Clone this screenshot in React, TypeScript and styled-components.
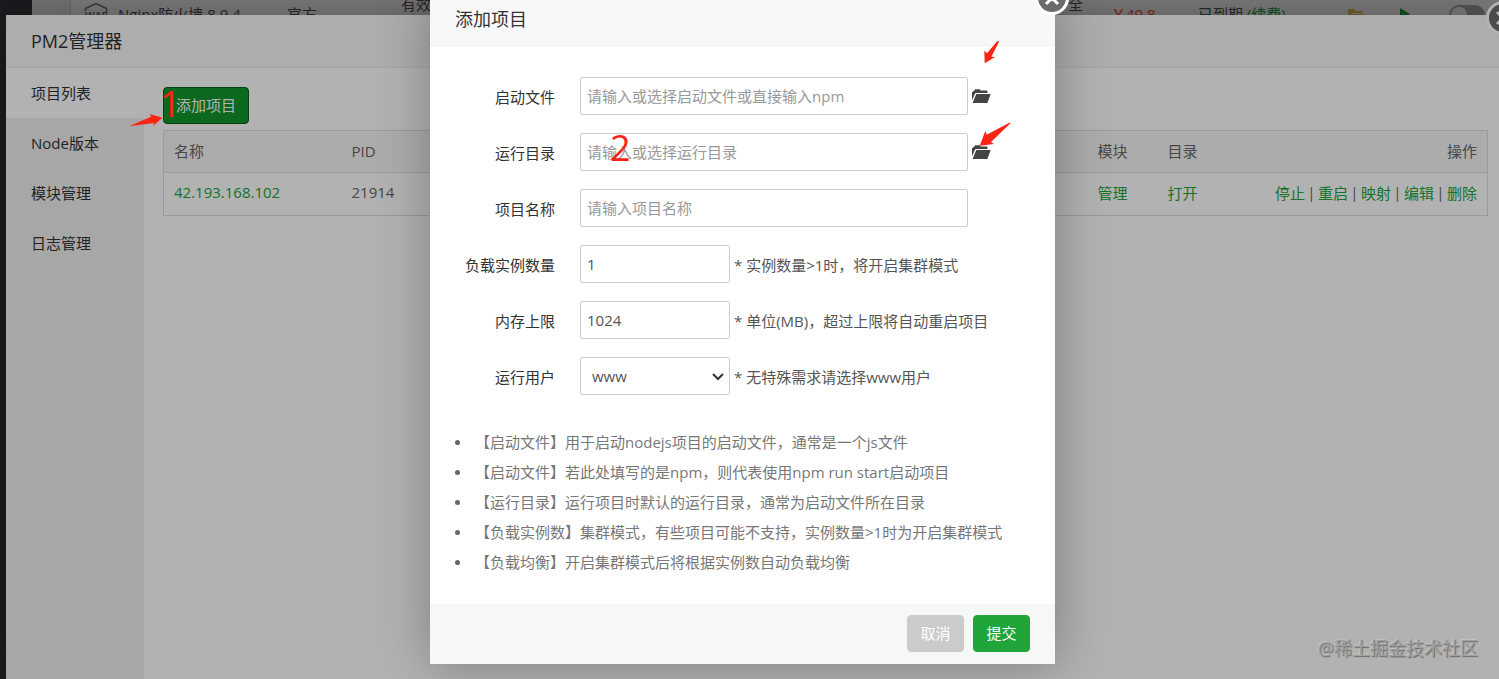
import React from "react";
import styled, { createGlobalStyle } from "styled-components";

const Global = createGlobalStyle`
  *, *::before, *::after { box-sizing: border-box; }
  html, body { margin: 0; padding: 0; }
  body, button, input, select {
    font-family: "Open Sans", "Noto Sans CJK SC", sans-serif;
    font-size: 15px;
  }
  body { color: #333; }
  a { color: #20a53a; text-decoration: none; }
`;

const Screen = styled.div`
  position: relative;
  min-height: 100vh;
  overflow: hidden;
  display: flex;
  background: #f1f1f1;
`;

/* ---------- soft-store page at the back ---------- */

const NavRail = styled.div`
  flex: 0 0 32px;
  background: #353a40;
`;

const StorePage = styled.main`
  flex: 1;
  min-width: 0;
  padding-left: 38px;
`;

const PluginRow = styled.div`
  display: grid;
  grid-template-columns: 34px 169px 114px minmax(0, 1fr) 87px 149px 52px 50px 50px;
  height: 28px;
  line-height: 28px;
  padding-left: 13px;
  border-left: 1px solid #ddd;
  background: #fff;
  color: #555;
  white-space: nowrap;
`;

const PluginIntro = styled.span`
  display: flex;
  justify-content: space-between;
  line-height: 8px;
  padding-right: 28px;
`;

const Price = styled.span`
  color: #fc4d26;
`;

const IconCell = styled.span`
  display: flex;
  align-items: center;
`;

const Switch = styled.span`
  display: flex;
  align-items: center;
  width: 36px;
  height: 20px;
  margin-top: 5px;
  padding: 2px;
  border-radius: 10px;
  background: #b0b0b0;
  &::before {
    content: "";
    width: 16px;
    height: 16px;
    border-radius: 50%;
    background: #fff;
  }
`;

/* ---------- layers ---------- */

const Mask = styled.div`
  position: absolute;
  inset: 0;
  background: rgba(0, 0, 0, 0.3);
`;

const WindowLayer = styled(Mask)`
  display: flex;
  padding: 15px 0 0 6px;
`;

const DialogLayer = styled(Mask)`
  display: flex;
  justify-content: center;
  align-items: flex-start;
  padding-right: 14px;
`;

const CloseButton = styled.button<{ $top: number; $right: number }>`
  position: absolute;
  top: ${(p) => p.$top}px;
  right: ${(p) => p.$right}px;
  width: 34px;
  height: 34px;
  padding: 0;
  display: flex;
  align-items: center;
  justify-content: center;
  border: 3px solid #fff;
  border-radius: 50%;
  background: #6b6b6b;
  color: #fff;
`;

/* ---------- PM2 manager window ---------- */

const Manager = styled.section`
  position: relative;
  flex: 1;
  min-width: 0;
  display: flex;
  flex-direction: column;
  background: #fff;
  box-shadow: 1px 1px 50px rgba(0, 0, 0, 0.3);
`;

const TitleBar = styled.header`
  height: 53px;
  line-height: 52px;
  padding: 0 25px;
  border-bottom: 1px solid #eee;
  background: #f8f8f8;
  color: #333;
  font-size: 18px;
`;

const ManagerBody = styled.div`
  flex: 1;
  display: flex;
`;

const SideMenu = styled.nav`
  flex: 0 0 138px;
  background: #f0f0f1;
`;

const SideItem = styled.a<{ $active?: boolean }>`
  display: block;
  height: 50px;
  line-height: 50px;
  padding-left: 25px;
  color: #333;
  background: ${(p) => (p.$active ? "#fff" : "transparent")};
`;

const ManagerMain = styled.div`
  flex: 1;
  min-width: 0;
  padding: 19px 11px 0 19px;
`;

const Button = styled.button<{ $tone?: "pressed" | "muted" }>`
  min-width: 57px;
  height: 37px;
  padding: 0 12px 2px;
  border: 1px solid
    ${(p) => (p.$tone === "pressed" ? "#0a5c1a" : p.$tone === "muted" ? "#cbcbcb" : "#20a53a")};
  border-radius: 4px;
  background: ${(p) =>
    p.$tone === "pressed" ? "#10952a" : p.$tone === "muted" ? "#cbcbcb" : "#20a53a"};
  color: #fff;
`;

const ProjectTable = styled.table`
  width: 100%;
  margin-top: 6px;
  border-collapse: collapse;
  table-layout: fixed;
  border: 1px solid #ddd;
  color: #666;
  th, td {
    height: 43px;
    padding: 0 10px 4px;
    border-bottom: 1px solid #ddd;
    font-weight: 400;
    text-align: left;
    white-space: nowrap;
  }
  th {
    height: 42px;
    padding-bottom: 2px;
    background: #f6f6f6;
  }
`;

const Col = styled.col<{ $w?: number }>`
  width: ${(p) => (p.$w ? `${p.$w}px` : "auto")};
`;

const Actions = styled.div`
  display: flex;
  justify-content: flex-end;
  gap: 4px;
`;

const Divider = styled.span`
  display: flex;
  justify-content: center;
  width: 5px;
`;

/* ---------- add-project dialog ---------- */

const Dialog = styled.section`
  position: relative;
  width: 625px;
  margin-top: -7px;
  background: #fff;
  box-shadow: 1px 1px 50px rgba(0, 0, 0, 0.3);
`;

const Form = styled.form`
  display: flex;
  flex-direction: column;
`;

const Fields = styled.div`
  display: flex;
  flex-direction: column;
  gap: 18px;
  padding: 31px 0 0;
`;

const Field = styled.div`
  display: flex;
  align-items: center;
  height: 38px;
  color: #555;
`;

const Label = styled.label`
  flex: 0 0 125px;
  margin-right: 25px;
  text-align: right;
  color: #333;
`;

const TextInput = styled.input<{ $short?: boolean }>`
  width: ${(p) => (p.$short ? 150 : 388)}px;
  height: 38px;
  padding: 0 6px;
  border: 1px solid #ccc;
  border-radius: 2px;
  background: #fff;
  color: #555;
  outline: none;
  &::placeholder { color: #999; }
`;

const SelectBox = styled.div`
  position: relative;
  width: 150px;
  svg {
    position: absolute;
    right: 5px;
    top: 15px;
    pointer-events: none;
  }
`;

const Select = styled.select`
  appearance: none;
  display: block;
  width: 100%;
  height: 38px;
  padding: 0 24px 0 11px;
  border: 1px solid #ccc;
  border-radius: 2px;
  background: #fff;
  color: #555;
`;

const Hint = styled.span`
  margin-left: 4px;
`;

const PickButton = styled.button`
  display: flex;
  margin-left: 4px;
  padding: 0;
  border: 0;
  background: none;
  color: #444;
`;

const Notes = styled.ul`
  margin: 32px 0 27px;
  padding: 0 0 0 25px;
  line-height: 30px;
  list-style: none;
  color: #777;
`;

const Note = styled.li`
  display: flex;
  align-items: center;
  &::before {
    content: "";
    width: 5px;
    height: 5px;
    margin-right: 15px;
    border-radius: 50%;
    background: #666;
  }
`;

const Footer = styled.footer`
  display: flex;
  justify-content: flex-end;
  gap: 9px;
  height: 60px;
  padding: 11px 25px 0 0;
  background: #f6f8f8;
`;

/* ---------- marks drawn over the screen ---------- */

const StepNumber = styled.span<{ $x: number; $y: number }>`
  position: absolute;
  left: ${(p) => p.$x}px;
  top: ${(p) => p.$y}px;
  font-size: 36px;
  line-height: 36px;
  color: #f9231a;
  pointer-events: none;
`;

const Arrow = styled.svg<{ $x: number; $y: number }>`
  position: absolute;
  left: ${(p) => p.$x}px;
  top: ${(p) => p.$y}px;
  fill: #fb2415;
  pointer-events: none;
`;

const Watermark = styled.div`
  position: absolute;
  right: 21px;
  bottom: 18px;
  font-size: 18px;
  line-height: 26px;
  color: #a0a0a0;
  text-shadow: 1px 1px 1px #666, -1px -1px 1px #c4c4c4;
`;

const Cross = () => (
  <svg width="16" height="16" viewBox="0 0 16 16" fill="none" stroke="currentColor" strokeWidth="3">
    <path d="M2 2l12 12M14 2L2 14" />
  </svg>
);

const FolderOpen = () => (
  <svg width="19" height="14" viewBox="0 0 19 14" fill="currentColor">
    <path d="M0 11.5V3L2 2 3 .3h4.800L8.600 1.600h5.900q1 0 1 1V4H4.400L3 4.600z" />
    <path d="M4.300 5H18.700L15.400 14H.6z" />
  </svg>
);

const actions = ["停止", "重启", "映射", "编辑", "删除"];

const notes = [
  "【启动文件】用于启动nodejs项目的启动文件，通常是一个js文件",
  "【启动文件】若此处填写的是npm，则代表使用npm run start启动项目",
  "【运行目录】运行项目时默认的运行目录，通常为启动文件所在目录",
  "【负载实例数】集群模式，有些项目可能不支持，实例数量>1时为开启集群模式",
  "【负载均衡】开启集群模式后将根据实例数自动负载均衡",
];

export default function App() {
  return (
    <Screen lang="zh-CN">
      <Global />
      <NavRail />
      <StorePage>
        <PluginRow>
          <svg width="24" height="28" viewBox="0 0 24 28" fill="none" stroke="#777" strokeWidth="1.5">
            <path d="M1.500 11V8.500L12 3.500 22.500 8.500V15" />
            <text x="1" y="20" fontSize="10" fontWeight="700" fill="#777" stroke="none">WAF</text>
          </svg>
          <span>Nginx防火墙 8.9.4</span>
          <span>官方</span>
          <PluginIntro>
            <span>有效</span>
            <span>全</span>
          </PluginIntro>
          <Price>￥49.8</Price>
          <span>
            已到期 <a href="#renew">(续费)</a>
          </span>
          <IconCell>
            <svg width="18" height="14" viewBox="0 0 18 14" fill="#e8c95a">
              <path d="M1 2h6l2 2h7v2H5L2 13H1z" />
              <path d="M5.500 7H18l-3 7H2.500z" />
            </svg>
          </IconCell>
          <IconCell>
            <svg width="12" height="12" viewBox="0 0 12 12" fill="#20a53a">
              <path d="M1 0l10 6-10 6z" />
            </svg>
          </IconCell>
          <Switch />
        </PluginRow>
      </StorePage>

      <WindowLayer>
        <Manager>
          <TitleBar>PM2管理器</TitleBar>
          <ManagerBody>
            <SideMenu>
              <SideItem href="#list" $active>项目列表</SideItem>
              <SideItem href="#node">Node版本</SideItem>
              <SideItem href="#modules">模块管理</SideItem>
              <SideItem href="#logs">日志管理</SideItem>
            </SideMenu>
            <ManagerMain>
              <Button type="button" $tone="pressed">添加项目</Button>
              <ProjectTable>
                <colgroup>
                  <Col $w={178} />
                  <Col />
                  <Col $w={70} />
                  <Col $w={70} />
                  <Col $w={260} />
                </colgroup>
                <thead>
                  <tr>
                    <th>名称</th>
                    <th>PID</th>
                    <th>模块</th>
                    <th>目录</th>
                    <th><Actions>操作</Actions></th>
                  </tr>
                </thead>
                <tbody>
                  <tr>
                    <td><a href="#project">42.193.168.102</a></td>
                    <td>21914</td>
                    <td><a href="#module">管理</a></td>
                    <td><a href="#open">打开</a></td>
                    <td>
                      <Actions>
                        {actions.map((name, i) => (
                          <React.Fragment key={name}>
                            {i > 0 && <Divider>|</Divider>}
                            <a href="#action">{name}</a>
                          </React.Fragment>
                        ))}
                      </Actions>
                    </td>
                  </tr>
                </tbody>
              </ProjectTable>
            </ManagerMain>
          </ManagerBody>
          <CloseButton type="button" aria-label="关闭" $top={-14} $right={-21}>
            <Cross />
          </CloseButton>
        </Manager>
      </WindowLayer>

      <DialogLayer>
        <Dialog role="dialog" aria-labelledby="dialog-title">
          <TitleBar id="dialog-title">添加项目</TitleBar>
          <Form onSubmit={(e) => e.preventDefault()}>
            <Fields>
              <Field>
                <Label htmlFor="file">启动文件</Label>
                <TextInput id="file" placeholder="请输入或选择启动文件或直接输入npm" />
                <PickButton type="button" aria-label="选择文件"><FolderOpen /></PickButton>
              </Field>
              <Field>
                <Label htmlFor="dir">运行目录</Label>
                <TextInput id="dir" placeholder="请输入或选择运行目录" />
                <PickButton type="button" aria-label="选择目录"><FolderOpen /></PickButton>
              </Field>
              <Field>
                <Label htmlFor="name">项目名称</Label>
                <TextInput id="name" placeholder="请输入项目名称" />
              </Field>
              <Field>
                <Label htmlFor="count">负载实例数量</Label>
                <TextInput id="count" $short defaultValue="1" />
                <Hint>* 实例数量&gt;1时，将开启集群模式</Hint>
              </Field>
              <Field>
                <Label htmlFor="memory">内存上限</Label>
                <TextInput id="memory" $short defaultValue="1024" />
                <Hint>* 单位(MB)，超过上限将自动重启项目</Hint>
              </Field>
              <Field>
                <Label htmlFor="user">运行用户</Label>
                <SelectBox>
                  <Select id="user" defaultValue="www">
                    <option>www</option>
                  </Select>
                  <svg width="14" height="10" viewBox="0 0 14 10" fill="none" stroke="#333" strokeWidth="2">
                    <path d="M2 2l5 5 5-5" />
                  </svg>
                </SelectBox>
                <Hint>* 无特殊需求请选择www用户</Hint>
              </Field>
            </Fields>
            <Notes>
              {notes.map((n) => (
                <Note key={n}>{n}</Note>
              ))}
            </Notes>
            <Footer>
              <Button type="button" $tone="muted">取消</Button>
              <Button type="submit">提交</Button>
            </Footer>
          </Form>
          <CloseButton type="button" aria-label="关闭" $top={-12} $right={-14}>
            <Cross />
          </CloseButton>
          <StepNumber $x={180} $y={137}>2</StepNumber>
          <Arrow $x={554} $y={48} width="16" height="23" viewBox="0 0 16 23">
            <path d="M.3 9.700L3 12.300 12.700.700 14.700 0 15 .7 7.400 15.700 11 16 .7 22.300z" />
          </Arrow>
          <Arrow $x={549} $y={129} width="33" height="25" viewBox="0 0 33 25">
            <path d="M.7 23.700L6.300 9 7.700 12.700 30.300.700 31.700 1 12 20 15 22z" />
          </Arrow>
        </Dialog>
      </DialogLayer>

      <StepNumber $x={160} $y={86}>1</StepNumber>
      <Arrow $x={130} $y={113} width="34" height="14" viewBox="0 0 34 14">
        <path d="M0 12.700L21 3.700 19.700 1 32.500 4.700 23 13 24 10 1 13z" />
      </Arrow>
      <Watermark>@稀土掘金技术社区</Watermark>
    </Screen>
  );
}
